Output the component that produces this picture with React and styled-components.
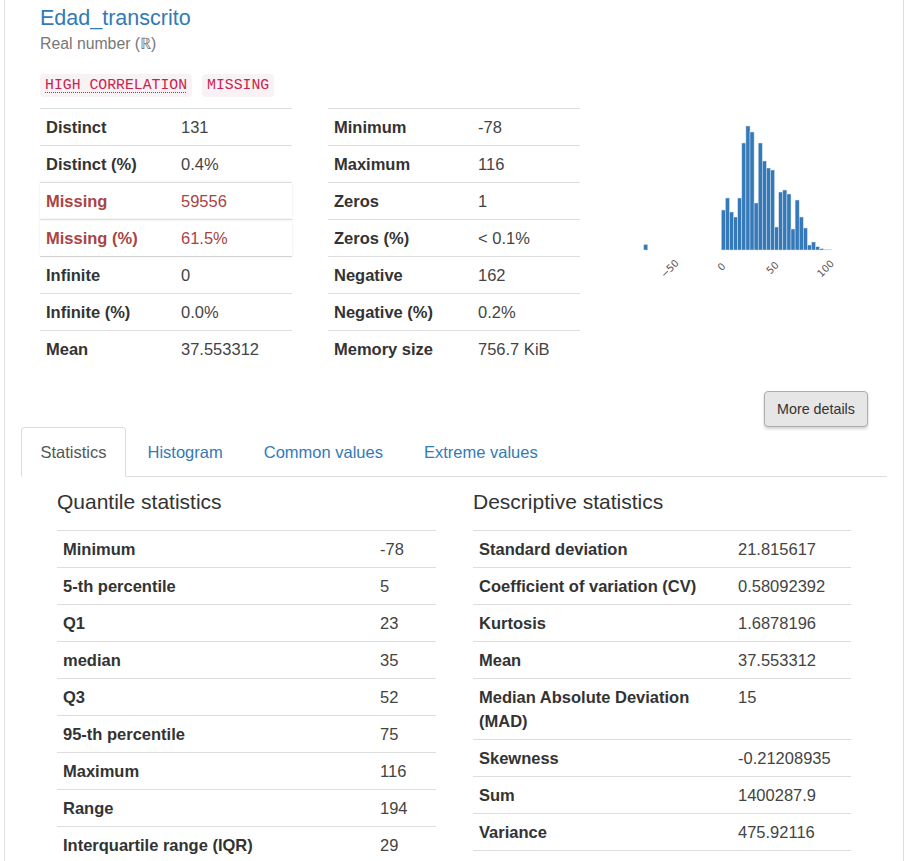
import React from "react";
import styled, {createGlobalStyle} from "styled-components";

const GlobalStyle = createGlobalStyle`
    html, body {
        margin: 0;
        padding: 0;
        background: #fff;
        overflow: hidden;
    }
    body {
        font-family: "Liberation Sans", Helvetica, Arial, sans-serif;
        color: #333;
    }
`

const Page = styled.div`
    height: 861px;
    overflow: hidden;
    padding-left: 4px;
    width: 900px;
`

const Panel = styled.div`
    border-left: 1px solid #e3e3e3;
    border-right: 1px solid #ddd;
    min-height: 100%;
    padding: 6px 0 0 35px;
    padding-right: 34px;
`

const Title = styled.h3`
    margin: 0;
    font-size: 21.5px;
    line-height: 24px;
    font-weight: normal;
    color: #337ab7;
`

const Subtitle = styled.div`
    margin-top: 4px;
    font-size: 15.8px;
    line-height: 20px;
    color: #777;
`

const Tags = styled.div`
    display: flex;
    gap: 10px;
    margin-top: 20px;
`

const Tag = styled.code`
    font-family: "Liberation Mono", "Courier New", monospace;
    font-size: 14.8px;
    line-height: 19px;
    padding: 2px 5px;
    color: #c7254e;
    background-color: #f9f2f4;
    border-radius: 4px;
    ${({abbr}) => abbr && `
        text-decoration: underline dotted;
        text-underline-offset: 3px;
        text-decoration-thickness: 1px;
    `}
`

const Overview = styled.div`
    display: grid;
    grid-template-columns: 252px 252px 1fr;
    column-gap: 36px;
    margin-top: 11px;
`

const Table = styled.div`
    display: flex;
    flex-direction: column;
    ${({closed}) => closed && `border-bottom: 1px solid #ddd;`}
`

const Row = styled.div`
    display: grid;
    grid-template-columns: ${({labelWidth}) => labelWidth}px 1fr;
    border-top: 1px solid #ddd;
    font-size: 16.5px;
    line-height: 24px;
    ${({alert}) => alert && `
        color: #a94442;
        box-shadow: 0 1px 3px rgba(0, 0, 0, 0.07), 0 -1px 2px rgba(0, 0, 0, 0.03);
        position: relative;
    `}
`

const Label = styled.div`
    padding: 6px;
    font-weight: bold;
    color: ${({alert}) => alert ? "#a94442" : "#333"};
`

const Value = styled.div`
    padding: 6px;
    color: ${({alert}) => alert ? "#a94442" : "#444"};
`

const ChartBox = styled.div`
    margin-left: -16px;
    padding-top: 0;
`

const ButtonRow = styled.div`
    display: flex;
    justify-content: flex-end;
    margin-top: 24px;
    padding-right: 1px;
`

const Button = styled.button`
    font-family: "Liberation Sans", Helvetica, Arial, sans-serif;
    width: 104px;
    height: 36px;
    font-size: 14.3px;
    color: #333;
    background: #e6e6e6;
    border: 1px solid #adadad;
    border-radius: 4px;
    box-shadow: 0 2px 3px rgba(0, 0, 0, 0.18);
    cursor: pointer;
`

const TabArea = styled.div`
    margin-left: -19px;
    margin-right: -18px;
`

const TabBar = styled.ul`
    display: flex;
    list-style: none;
    margin: 0;
    padding: 0;
    border-bottom: 1px solid #ddd;
`

const Tab = styled.li`
    height: 48px;
    display: flex;
    align-items: center;
    padding: 0 18.5px;
    margin-right: 2px;
    margin-bottom: -1px;
    font-size: 16.5px;
    border: 1px solid transparent;
    border-radius: 4px 4px 0 0;
    color: #337ab7;
    ${({active}) => active && `
        color: #555;
        background: #fff;
        border-color: #ddd;
        border-bottom-color: #fff;
    `}
`

const TabContent = styled.div`
    display: grid;
    grid-template-columns: 379px 378px;
    column-gap: 37px;
    padding: 0 36px;
`

const SectionTitle = styled.h4`
    margin: 0;
    padding-top: 13px;
    height: 40px;
    font-size: 21px;
    line-height: 24px;
    font-weight: normal;
    color: #333;
`

const overview1 = [
    ["Distinct", "131"],
    ["Distinct (%)", "0.4%"],
    ["Missing", "59556", true],
    ["Missing (%)", "61.5%", true],
    ["Infinite", "0"],
    ["Infinite (%)", "0.0%"],
    ["Mean", "37.553312"],
]

const overview2 = [
    ["Minimum", "-78"],
    ["Maximum", "116"],
    ["Zeros", "1"],
    ["Zeros (%)", "< 0.1%"],
    ["Negative", "162"],
    ["Negative (%)", "0.2%"],
    ["Memory size", "756.7 KiB"],
]

const quantiles = [
    ["Minimum", "-78"],
    ["5-th percentile", "5"],
    ["Q1", "23"],
    ["median", "35"],
    ["Q3", "52"],
    ["95-th percentile", "75"],
    ["Maximum", "116"],
    ["Range", "194"],
    ["Interquartile range (IQR)", "29"],
]

const descriptive = [
    ["Standard deviation", "21.815617"],
    ["Coefficient of variation (CV)", "0.58092392"],
    ["Kurtosis", "1.6878196"],
    ["Mean", "37.553312"],
    ["Median Absolute Deviation (MAD)", "15"],
    ["Skewness", "-0.21208935"],
    ["Sum", "1400287.9"],
    ["Variance", "475.92116"],
]

// bar heights read off the histogram, left to right from 0
const bars = [40, 52, 38, 33, 52, 107, 124, 118, 47, 107, 89, 82, 80, 23, 58, 60, 56, 21, 50, 33, 22, 5, 8, 3.3, 1.3, 0.7, 0.4]

function StatTable({rows, labelWidth, closed}) {
    return (
        <Table closed={closed}>
            {rows.map(([label, value, alert]) => (
                <Row key={label} labelWidth={labelWidth} alert={alert}>
                    <Label alert={alert}>{label}</Label>
                    <Value alert={alert}>{value}</Value>
                </Row>
            ))}
        </Table>
    )
}

function Histogram() {
    const base = 142;
    const ticks = [["\u221250", 70, 161], ["0", 122, 159], ["50", 173, 160], ["100", 226, 161]];
    return (
        <svg width="270" height="180" viewBox="0 0 270 180">
            <rect x="43.7" y={base - 5.5} width="4" height="5.5" fill="#337ab7" stroke="#dfe9f3" strokeWidth="0.4"/>
            {bars.map((h, i) => (
                <rect
                    key={i}
                    x={121.3 + i * 4.1}
                    y={base - h}
                    width="4.1"
                    height={h}
                    fill="#3579b8"
                    stroke="#d9e6f2"
                    strokeWidth="0.5"
                />
            ))}
            {ticks.map(([t, x, y]) => (
                <text
                    key={t}
                    x={x}
                    y={y}
                    fontSize="10"
                    fill="#555"
                    textAnchor="middle"
                    dominantBaseline="middle"
                    fontFamily="'DejaVu Sans', sans-serif"
                    transform={`rotate(-45 ${x} ${y})`}
                >{t}</text>
            ))}
        </svg>
    )
}

export default function App() {
    return (
        <>
            <GlobalStyle/>
            <Page>
                <Panel>
                    <Title>Edad_transcrito</Title>
                    <Subtitle>Real number (ℝ)</Subtitle>
                    <Tags>
                        <Tag abbr>HIGH CORRELATION</Tag>
                        <Tag>MISSING</Tag>
                    </Tags>
                    <Overview>
                        <StatTable rows={overview1} labelWidth={135}/>
                        <StatTable rows={overview2} labelWidth={144}/>
                        <ChartBox>
                            <Histogram/>
                        </ChartBox>
                    </Overview>
                    <ButtonRow>
                        <Button>More details</Button>
                    </ButtonRow>
                    <TabArea>
                        <TabBar>
                            <Tab active>Statistics</Tab>
                            <Tab>Histogram</Tab>
                            <Tab>Common values</Tab>
                            <Tab>Extreme values</Tab>
                        </TabBar>
                        <TabContent>
                            <div>
                                <SectionTitle>Quantile statistics</SectionTitle>
                                <StatTable rows={quantiles} labelWidth={317}/>
                            </div>
                            <div>
                                <SectionTitle>Descriptive statistics</SectionTitle>
                                <StatTable rows={descriptive} labelWidth={259} closed/>
                            </div>
                        </TabContent>
                    </TabArea>
                </Panel>
            </Page>
        </>
    )
}
